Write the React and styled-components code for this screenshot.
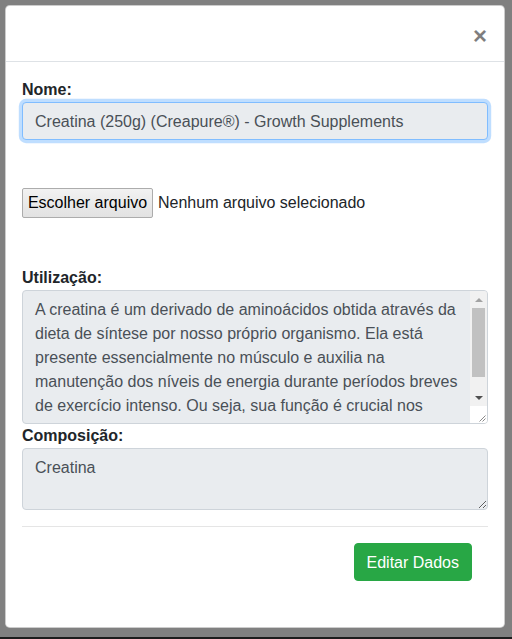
import React from 'react';
import styled, { createGlobalStyle } from 'styled-components';

const GlobalStyle = createGlobalStyle`
  html, body {
    margin: 0;
    padding: 0;
  }
  body {
    font-family: 'Liberation Sans', Arial, sans-serif;
    background: #808080;
  }
  * {
    box-sizing: border-box;
  }
`;

export const Backdrop = styled.div`
  height: 639px;
  padding: 5px 0 0 5px;
  background: #808080;
  border-bottom: 2px solid #1c1c1c;
`;

export const Modal = styled.div`
  width: 500px;
  background: #fff;
  border: 1px solid rgba(0, 0, 0, 0.2);
  border-radius: 4.8px;
`;

export const Header = styled.div`
  display: flex;
  align-items: center;
  justify-content: flex-end;
  height: 56px;
  padding: 0 17px 0 16px;
  border-bottom: 1px solid #dee2e6;
`;

export const Close = styled.button`
  border: none;
  background: transparent;
  padding: 0;
  margin-top: 4px;
  font-family: 'Liberation Sans', Arial, sans-serif;
  font-size: 24px;
  font-weight: 700;
  line-height: 1;
  color: #000;
  opacity: 0.5;
  text-shadow: 0 1px 0 #fff;
  cursor: pointer;
`;

export const Body = styled.form`
  padding: 16px;
  color: #212529;
`;

export const Label = styled.label`
  display: block;
  font-size: 16px;
  font-weight: 700;
  line-height: 24px;
  color: #212529;
`;

export const Input = styled.input`
  display: block;
  width: 100%;
  height: 38px;
  padding: 7px 12px 5px;
  font-family: inherit;
  font-size: 16px;
  line-height: 24px;
  color: #495057;
  background: #e9ecef;
  border: 1px solid ${(p) => (p.$focused ? '#80bdff' : '#ced4da')};
  border-radius: 4px;
  box-shadow: ${(p) => (p.$focused ? '0 0 0 3.2px rgba(0, 123, 255, 0.25)' : 'none')};
  outline: none;
`;

export const TextArea = styled.textarea`
  display: block;
  width: 100%;
  padding: 7px 12px 5px;
  font-family: inherit;
  font-size: 16px;
  line-height: 24px;
  color: #495057;
  background: #e9ecef;
  border: 1px solid #ced4da;
  border-radius: 4px;
  outline: none;
  resize: vertical;
  overflow: hidden;
`;

// the headless browser hides native scrollbars, so this one is drawn over the textarea
export const ScrollWrap = styled.div`
  position: relative;
`;

export const ScrollBar = styled.div`
  position: absolute;
  top: 1px;
  right: 1px;
  bottom: 1px;
  width: 17px;
  display: flex;
  flex-direction: column;
  background: #f1f1f1;
  border-radius: 0 3px 3px 0;
  overflow: hidden;
`;

export const ScrollButton = styled.div`
  height: 17px;
  display: flex;
  align-items: center;
  justify-content: center;
`;

export const Track = styled.div`
  flex: 1;
  padding: 0 2px;
`;

export const Thumb = styled.div`
  height: ${(p) => p.$size}px;
  background: #c1c1c1;
`;

export const Corner = styled.div`
  height: 17px;
  background: #fff;
`;

export const FileRow = styled.div`
  display: flex;
  align-items: center;
  gap: 5px;
  margin: 48px 0;
  font-size: 16px;
`;

export const FileButton = styled.button`
  width: 131px;
  height: 30px;
  padding: 0;
  font-family: inherit;
  font-size: 16px;
  color: #000;
  background: linear-gradient(#f2f2f2, #e2e2e2);
  border: 1px solid #acacac;
  border-radius: 2px;
`;

export const FileName = styled.span`
  color: #212529;
`;

export const Divider = styled.hr`
  margin: 16px 0;
  border: 0;
  border-top: 1px solid rgba(0, 0, 0, 0.1);
`;

export const Footer = styled.div`
  display: flex;
  justify-content: flex-end;
  padding-right: 16px;
  margin-bottom: 30px;
`;

export const SubmitButton = styled.button`
  height: 38px;
  padding: 7px 12px 5px;
  font-family: inherit;
  font-size: 16px;
  line-height: 24px;
  color: #fff;
  background: #28a745;
  border: 1px solid #28a745;
  border-radius: 4px;
  cursor: pointer;
`;

const Arrow = ({ up, color }) => (
  <svg width="8" height="4" viewBox="0 0 8 4">
    <polygon points={up ? '0,4 4,0 8,4' : '0,0 8,0 4,4'} fill={color} />
  </svg>
);

const Grip = () => (
  <svg width="17" height="17" viewBox="0 0 17 17">
    <path d="M15.5 9.5 L9.5 15.5 M15.5 12.5 L12.5 15.5" stroke="#8a8a8a" strokeWidth="1" />
  </svg>
);

const ScrollTextArea = ({ thumb, ...props }) => (
  <ScrollWrap>
    <TextArea {...props} />
    <ScrollBar>
      <ScrollButton>
        <Arrow up color="#a3a3a3" />
      </ScrollButton>
      <Track>
        <Thumb $size={thumb} />
      </Track>
      <ScrollButton>
        <Arrow color="#505050" />
      </ScrollButton>
      <Corner>
        <Grip />
      </Corner>
    </ScrollBar>
  </ScrollWrap>
);

const utilizacao =
  'A creatina é um derivado de aminoácidos obtida através da dieta de síntese por nosso próprio organismo. Ela está presente essencialmente no músculo e auxilia na manutenção dos níveis de energia durante períodos breves de exercício intenso. Ou seja, sua função é crucial nos treinos de alta intensidade, garantindo mais força, potência e resistência muscular durante o exercício.';

export default function App() {
  return (
    <>
      <GlobalStyle />
      <Backdrop>
        <Modal>
          <Header>
            <Close type="button" aria-label="Close">×</Close>
          </Header>
          <Body onSubmit={(e) => e.preventDefault()}>
            <Label>Nome:</Label>
            <Input $focused readOnly value="Creatina (250g) (Creapure®) - Growth Supplements" />

            <FileRow>
              <FileButton type="button">Escolher arquivo</FileButton>
              <FileName>Nenhum arquivo selecionado</FileName>
            </FileRow>

            <Label>Utilização:</Label>
            <ScrollTextArea rows={5} readOnly value={utilizacao} thumb={69} />

            <Label>Composição:</Label>
            <TextArea rows={2} readOnly value="Creatina" />

            <Divider />
            <Footer>
              <SubmitButton type="submit">Editar Dados</SubmitButton>
            </Footer>
          </Body>
        </Modal>
      </Backdrop>
    </>
  );
}
